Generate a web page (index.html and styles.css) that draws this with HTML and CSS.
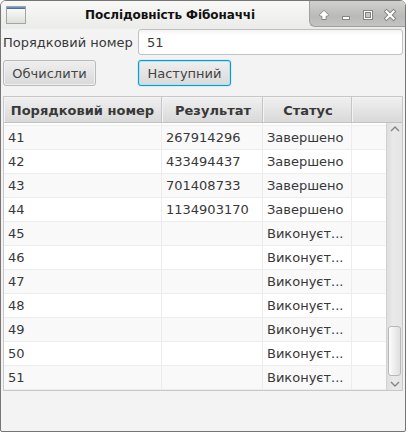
FILE: index.html
```html
<!DOCTYPE html>
<html lang="uk">
<head>
<meta charset="utf-8">
<title>Послідовність Фібоначчі</title>
<link rel="stylesheet" href="styles.css">
</head>
<body>
<div class="window">
  <header class="titlebar">
    <svg class="app-icon" width="20" height="18" viewBox="0 0 20 18">
      <defs><linearGradient id="pane" x1="0" y1="0" x2="0" y2="1"><stop offset="0" stop-color="#fff"/><stop offset="1" stop-color="#dcdfd9"/></linearGradient></defs>
      <rect x=".5" y=".5" width="19" height="17" fill="url(#pane)" stroke="#a2a5a0"/>
      <rect x="1" y="1" width="18" height="1" fill="#6c8fc4"/>
      <rect x="1" y="2" width="18" height="1" fill="#4470b0"/>
    </svg>
    <h1 class="title">Послідовність Фібоначчі</h1>
    <div class="controls">
      <svg width="94" height="26" viewBox="0 1 94 26">
        <g fill="#fff" stroke="#858585">
          <path d="M14 10.200 L18.600 14.800 L17.600 16.200 H16.200 V19.500 H11.800 V16.200 H10.400 L9.400 14.800 Z" stroke-linejoin="round"/>
          <rect x="32.500" y="16.500" width="7" height="3"/>
          <rect x="53.500" y="10.500" width="9" height="9"/>
          <rect x="55.500" y="12.500" width="5" height="5" fill="#c4c4c4"/>
        </g>
        <path d="M76.500 11.500L83.500 18.500M83.500 11.500L76.500 18.500" stroke="#808080" stroke-width="4" stroke-linecap="square"/>
        <path d="M76.500 11.500L83.500 18.500M83.500 11.500L76.500 18.500" stroke="#fff" stroke-width="2.200" stroke-linecap="square"/>
      </svg>
    </div>
  </header>
  <main class="content">
    <div class="form">
      <label class="label" for="n">Порядковий номер</label>
      <input class="field" id="n" value="51">
      <button class="button">Обчислити</button>
      <button class="button focused">Наступний</button>
    </div>
    <section class="table">
      <div class="head"><div>Порядковий номер</div><div>Результат</div><div>Статус</div><div></div></div>
      <div class="body">
        <div class="rows">
          <div class="row partial"><div></div><div></div><div></div><div></div></div>
          <div class="row"><div>41</div><div>267914296</div><div>Завершено</div><div></div></div>
          <div class="row"><div>42</div><div>433494437</div><div>Завершено</div><div></div></div>
          <div class="row"><div>43</div><div>701408733</div><div>Завершено</div><div></div></div>
          <div class="row"><div>44</div><div>1134903170</div><div>Завершено</div><div></div></div>
          <div class="row"><div>45</div><div></div><div>Виконуєт...</div><div></div></div>
          <div class="row"><div>46</div><div></div><div>Виконуєт...</div><div></div></div>
          <div class="row"><div>47</div><div></div><div>Виконуєт...</div><div></div></div>
          <div class="row"><div>48</div><div></div><div>Виконуєт...</div><div></div></div>
          <div class="row"><div>49</div><div></div><div>Виконуєт...</div><div></div></div>
          <div class="row"><div>50</div><div></div><div>Виконуєт...</div><div></div></div>
          <div class="row"><div>51</div><div></div><div>Виконуєт...</div><div></div></div>
        </div>
        <div class="scrollbar">
          <svg width="15" height="12" viewBox="0 0 15 12"><path d="M4 8L8 4L12 8" fill="none" stroke="#858585" stroke-width="1.400"/></svg>
          <div class="thumb"></div>
          <svg width="15" height="14" viewBox="0 0 15 14"><path d="M4 6L8 10L12 6" fill="none" stroke="#858585" stroke-width="1.400"/></svg>
        </div>
      </div>
    </section>
  </main>
</div>
</body>
</html>
```
FILE: styles.css
```css
* { box-sizing: border-box; }
body {
  margin: 0;
  background: #fff;
  font: 13px "DejaVu Sans", sans-serif;
  color: #383838;
}
.window {
  width: 406px;
  height: 432px;
  border: 1px solid #757575;
  border-radius: 6px 6px 2px 2px;
  background: #f3f3f3;
  overflow: hidden;
}
.titlebar {
  display: flex;
  height: 28px;
  background: linear-gradient(#f8f8f7, #ebebea);
}
.app-icon { margin: 5px 0 0 5px; }
.title {
  flex: 1;
  margin: 0 0 0 59px;
  font-size: 12px;
  line-height: 29px;
  letter-spacing: -0.07px;
  color: #111;
  white-space: nowrap;
}
.controls {
  width: 96px;
  height: 26px;
  border: solid #a0a0a0;
  border-width: 0 0 1px 1px;
  border-bottom-left-radius: 6px;
  background: linear-gradient(#d0d0cf, #bababa 60%, #c3c3c2);
}
.controls svg { display: block; }
.content { padding: 0 2px; }
.form {
  display: grid;
  grid-template-columns: 135px 265px;
  grid-template-rows: 26px 27px;
  row-gap: 4px;
}
.label { line-height: 28px; }
.field {
  width: 265px;
  height: 26px;
  padding: 0 8px;
  border: 1px solid #c0c0c0;
  border-radius: 3px;
  background: linear-gradient(#f3f3f3, #fff 5px);
  font: inherit;
  color: #383838;
  outline: none;
}
.button {
  justify-self: start;
  width: 93px;
  height: 26px;
  margin-top: 1px;
  padding: 0;
  border: 1px solid #bababa;
  border-radius: 3px;
  background: linear-gradient(#efefef, #d9d9d9);
  box-shadow: inset 0 0 0 1px #f0f0f0;
  font: inherit;
  color: #444;
}
.focused {
  border-color: #039ed3;
  box-shadow: inset 0 0 0 1px #b8dfec, 0 0 1px #039ed3;
}
.table {
  height: 295px;
  margin-top: 10px;
  border: 1px solid #c8c8c8;
  background: #fff;
}
.head, .row {
  display: grid;
  grid-template-columns: 158px 101px 89px 1fr;
}
.head {
  height: 26px;
  border-bottom: 1px solid #c2c2c2;
  font-weight: bold;
  line-height: 27px;
  text-align: center;
}
.head div {
  height: 25px;
  border-right: 1px solid #c5c5c5;
  background: linear-gradient(#f0f0f0, #d9d9d9);
  box-shadow: inset 1px 1px #f3f3f3;
}
.head div:nth-child(2), .head div:nth-child(3) { padding-left: 2px; }
.head div:last-child { border-right: 0; }
.body { display: flex; height: 267px; }
.rows { flex: 1; }
.row {
  height: 24px;
  line-height: 23px;
  background: #f9f9f9;
}
.row:nth-child(odd) { background: #fff; }
.row.partial { height: 3px; }
.row div {
  padding-left: 4px;
  border-right: 1px solid #ededed;
  border-bottom: 1px solid #ededed;
  white-space: nowrap;
}
.row div:last-child { border-right: 0; }
.scrollbar {
  display: flex;
  flex-direction: column;
  width: 16px;
  border-left: 1px solid #d2d2d2;
  background: linear-gradient(to right, #dedede, #e9e9e9 40%, #e5e5e5);
}
.scrollbar svg { flex: none; }
.thumb {
  width: 13px;
  height: 50px;
  margin: auto 1px 0;
  border: 1px solid #b8b8b8;
  border-radius: 3px;
  background: linear-gradient(to right, #fcfcfc, #dfdfdf);
}
```
